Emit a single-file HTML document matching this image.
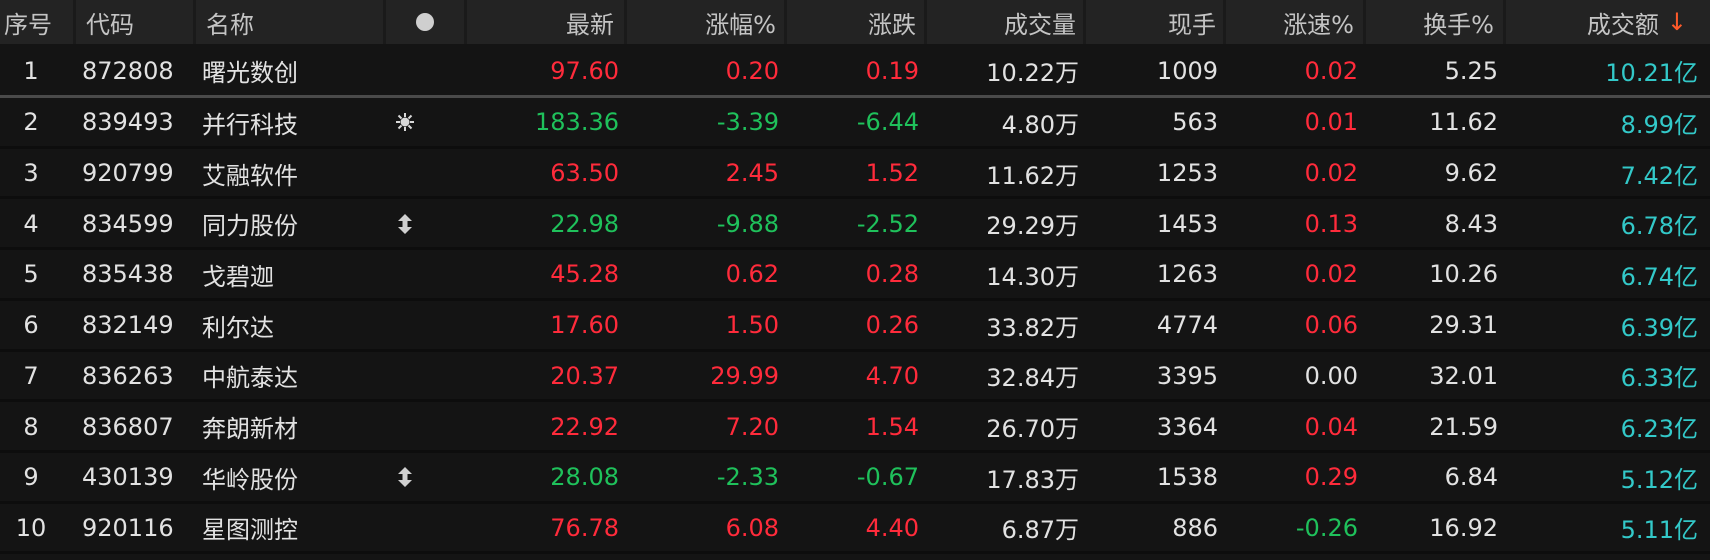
<!DOCTYPE html>
<html><head><meta charset="utf-8"><style>
html,body{margin:0;padding:0;background:#141414;width:1710px;height:560px;overflow:hidden;}
body{font-family:"DejaVu Sans","Noto Sans CJK SC",sans-serif;font-size:24px;color:#e2e2e2;}
.row{position:absolute;left:0;width:1710px;}
.hd{top:0;height:44px;background:#232323;color:#c4c4c4;}
.c{position:absolute;top:0;height:100%;display:flex;align-items:center;white-space:nowrap;}
.r{justify-content:flex-end;}
.sep{position:absolute;top:0;width:3px;height:44px;background:#1a1a1a;}
.red{color:#ff2b3b}.grn{color:#1fc15b}.cy{color:#33c9c9}
.line{position:absolute;left:0;width:1710px;height:3px;background:#0d0d0d;}
</style></head><body>
<div class="row hd">
<div class="c" style="left:4px">序号</div>
<div class="c" style="left:86px">代码</div>
<div class="c" style="left:206px">名称</div>
<div class="c" style="left:416px"><span style="display:inline-block;width:18px;height:18px;border-radius:50%;background:#cfcfcf"></span></div>
<div class="c r" style="right:1096px">最新</div>
<div class="c r" style="right:934px">涨幅%</div>
<div class="c r" style="right:794px">涨跌</div>
<div class="c r" style="right:634px">成交量</div>
<div class="c r" style="right:494px">现手</div>
<div class="c r" style="right:356px">涨速%</div>
<div class="c r" style="right:216px">换手%</div>
<div class="c r" style="right:23px">成交额 <span style="color:#ff5a2a;margin-left:8px">↓</span></div>
<div class="sep" style="left:73px"></div><div class="sep" style="left:193px"></div><div class="sep" style="left:383px"></div><div class="sep" style="left:464px"></div><div class="sep" style="left:624px"></div><div class="sep" style="left:784px"></div><div class="sep" style="left:924px"></div><div class="sep" style="left:1083px"></div><div class="sep" style="left:1223px"></div><div class="sep" style="left:1363px"></div><div class="sep" style="left:1503px"></div>
</div>
<div id="rows"></div>
<script>
(function(){
var d=[
["1","872808","曙光数创","","97.60","0.20","0.19","10.22万","1009","0.02","5.25","10.21亿","r","r","r","r"],
["2","839493","并行科技","sun","183.36","-3.39","-6.44","4.80万","563","0.01","11.62","8.99亿","g","g","g","r"],
["3","920799","艾融软件","","63.50","2.45","1.52","11.62万","1253","0.02","9.62","7.42亿","r","r","r","r"],
["4","834599","同力股份","ud","22.98","-9.88","-2.52","29.29万","1453","0.13","8.43","6.78亿","g","g","g","r"],
["5","835438","戈碧迦","","45.28","0.62","0.28","14.30万","1263","0.02","10.26","6.74亿","r","r","r","r"],
["6","832149","利尔达","","17.60","1.50","0.26","33.82万","4774","0.06","29.31","6.39亿","r","r","r","r"],
["7","836263","中航泰达","","20.37","29.99","4.70","32.84万","3395","0.00","32.01","6.33亿","r","r","r","w"],
["8","836807","奔朗新材","","22.92","7.20","1.54","26.70万","3364","0.04","21.59","6.23亿","r","r","r","r"],
["9","430139","华岭股份","ud","28.08","-2.33","-0.67","17.83万","1538","0.29","6.84","5.12亿","g","g","g","r"],
["10","920116","星图测控","","76.78","6.08","4.40","6.87万","886","-0.26","16.92","5.11亿","r","r","r","g"]];
var cls={r:"red",g:"grn",w:""};
var h="";var y=44;
for(var i=0;i<d.length;i++){var r=d[i];var ht=i==0?53:50.7;
var icon="";
if(r[3]=="sun")icon='<svg width="20" height="20" viewBox="0 0 20 20"><circle cx="10" cy="10" r="4.5" fill="#d8d8d8"/><g stroke="#d8d8d8" stroke-width="2"><path d="M10 1v4M10 15v4M1 10h4M15 10h4M3.5 3.5l3 3M13.5 13.5l3 3M3.5 16.5l3-3M13.5 6.5l3-3"/></g></svg>';
if(r[3]=="ud")icon='<svg width="16" height="20" viewBox="0 0 16 20"><path d="M8 0L15 7H10.5V13H15L8 20L1 13H5.5V7H1Z" fill="#d0d0d0"/></svg>';
h+='<div class="row" style="top:'+y+'px;height:'+ht+'px">'+
'<div class="c" style="left:0;width:62px;justify-content:center">'+r[0]+'</div>'+
'<div class="c" style="left:82px">'+r[1]+'</div>'+
'<div class="c" style="left:202px">'+r[2]+'</div>'+
'<div class="c" style="left:395px;width:20px;justify-content:center">'+icon+'</div>'+
'<div class="c r '+cls[r[12]]+'" style="right:1091px">'+r[4]+'</div>'+
'<div class="c r '+cls[r[13]]+'" style="right:931px">'+r[5]+'</div>'+
'<div class="c r '+cls[r[14]]+'" style="right:791px">'+r[6]+'</div>'+
'<div class="c r" style="right:631px">'+r[7]+'</div>'+
'<div class="c r" style="right:492px">'+r[8]+'</div>'+
'<div class="c r '+cls[r[15]]+'" style="right:352px">'+r[9]+'</div>'+
'<div class="c r" style="right:212px">'+r[10]+'</div>'+
'<div class="c r cy" style="right:12px">'+r[11]+'</div></div>';
y+=ht;
h+='<div class="line" style="top:'+(y-2)+'px;'+(i==0?'background:#4a4a4a;':'')+'"></div>';
}
document.getElementById("rows").innerHTML=h;
})();
</script>
</body></html>
